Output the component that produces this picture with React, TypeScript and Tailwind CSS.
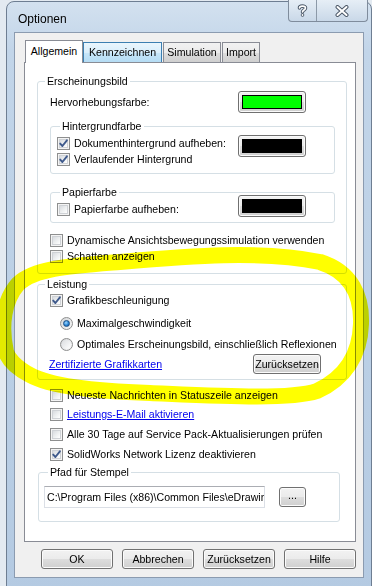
import type { ReactNode } from 'react';

function Check({ checked }: { checked?: boolean }) {
  return (
    <span className="relative flex size-[13px] shrink-0 items-center justify-center border border-[#8e8f8f] bg-[#f4f4f4]">
      <span className="size-[9px] border border-[#cfd2d6] bg-[linear-gradient(135deg,#d8dbdf_0%,#eef0f1_55%,#ffffff_100%)]" />
      {checked && (
        <svg className="absolute left-0 top-0" width="11" height="11" viewBox="0 0 11 11">
          <path d="M2.2 5.6 L4.4 8 L8.9 2.3" fill="none" stroke="#3f5a8c" strokeWidth="1.9" strokeLinecap="round" strokeLinejoin="round" />
        </svg>
      )}
    </span>
  );
}

function Radio({ checked }: { checked?: boolean }) {
  return (
    <span className="flex size-[13px] shrink-0 items-center justify-center rounded-full border border-[#8e8f8f] bg-[linear-gradient(135deg,#d4d6d9,#f7f7f7)]">
      {checked ? (
        <span className="size-[7px] rounded-full border border-[#1b4f86] bg-[radial-gradient(circle_at_40%_35%,#9fd8ff_0%,#2a86d6_55%,#0d4d92_100%)]" />
      ) : (
        <span className="size-[9px] rounded-full bg-[linear-gradient(135deg,#dcdee1,#ffffff)]" />
      )}
    </span>
  );
}

function CheckRow({ checked, children, className = '' }: { checked?: boolean; children: ReactNode; className?: string }) {
  return (
    <div className={`flex h-[16px] items-center ${className}`}>
      <Check checked={checked} />
      <span className="ml-[4px] whitespace-nowrap">{children}</span>
    </div>
  );
}

function WinButton({ children, className = '' }: { children: ReactNode; className?: string }) {
  return (
    <div
      className={`flex items-center justify-center rounded-[3px] border border-[#707070] bg-[linear-gradient(#f2f2f2_0%,#ebebeb_50%,#dddddd_51%,#cfcfcf_100%)] shadow-[inset_0_0_0_1px_#fbfbfb] ${className}`}
    >
      {children}
    </div>
  );
}

function ColorButton({ color, className = '' }: { color: string; className?: string }) {
  return (
    <WinButton className={`h-[22px] w-[68px] shrink-0 p-[3px] ${className}`}>
      <span className={`h-full w-full border border-black ${color}`} />
    </WinButton>
  );
}

function Group({ label, className = '', labelLeft, children }: { label: string; className?: string; labelLeft: string; children: ReactNode }) {
  return (
    <div className={`relative rounded-[3px] border border-[#d5dfe5] ${className}`}>
      <span className={`absolute -top-[7px] bg-white px-[2px] leading-[13px] ${labelLeft}`}>{label}</span>
      {children}
    </div>
  );
}

export default function App() {
  return (
    <div className="relative h-[586px] w-[372px] overflow-hidden bg-[#e3eaf1] font-['Liberation_Sans',Arial,sans-serif] text-[10.6px] leading-[13px] text-black">
      {/* dialog window */}
      <div className="ml-[6px] mt-[1px] flex h-[600px] w-[366px] flex-col rounded-t-[8px] border border-[#6e7e92] bg-[linear-gradient(180deg,#d3e1ef_0%,#c2d5e9_8%,#b4cae2_100%)]">
        {/* title bar */}
        <div className="flex h-[30px] items-start">
          <span className="ml-[11px] mt-[10px] text-[12px] leading-[14px]">Optionen</span>
          <div className="-mt-[2px] ml-auto mr-[3px] flex h-[22px] overflow-hidden rounded-b-[4px] border border-t-0 border-[#7f8c9c] bg-[linear-gradient(180deg,#e6eef6,#c9d8e8)]">
            <div className="flex w-[28px] items-center justify-center border-r border-[#8c99a8]">
              <svg width="11" height="13" viewBox="0 0 11 13">
                <path d="M2.5 4 C2.5 1.5 8.5 1.5 8.5 4 C8.5 6 5.5 6 5.5 8" fill="none" stroke="#4c5868" strokeWidth="3.6" strokeLinecap="round" />
                <path d="M2.5 4 C2.5 1.5 8.5 1.5 8.5 4 C8.5 6 5.5 6 5.5 8" fill="none" stroke="#ffffff" strokeWidth="1.6" strokeLinecap="round" />
                <circle cx="5.5" cy="11" r="1.8" fill="#4c5868" />
                <circle cx="5.5" cy="11" r="0.9" fill="#ffffff" />
              </svg>
            </div>
            <div className="flex w-[50px] items-center justify-center">
              <svg width="14" height="12" viewBox="0 0 14 12">
                <path d="M2.5 2 L11.5 10 M11.5 2 L2.5 10" fill="none" stroke="#4c5868" strokeWidth="4" strokeLinecap="round" />
                <path d="M2.5 2 L11.5 10 M11.5 2 L2.5 10" fill="none" stroke="#ffffff" strokeWidth="2" strokeLinecap="round" />
              </svg>
            </div>
          </div>
        </div>

        {/* client area */}
        <div className="mx-[7px] flex h-[546px] flex-col border border-[#8b9bb0] bg-[#f0f0f0] pt-[7px]">
          {/* tabs */}
          <div className="ml-[10px] flex h-[22px] items-end">
            <div className="relative z-10 -mb-px flex h-[23px] w-[58px] items-center justify-center border-x border-t border-[#898c95] bg-white pb-[2px]">
              Allgemein
            </div>
            <div className="flex h-[20px] w-[79px] items-center justify-center border-x border-t border-[#3c7fb1] bg-[linear-gradient(#eaf6fd,#d9eefb_50%,#c7e6f9_51%,#b5dcf4)]">
              Kennzeichnen
            </div>
            <div className="ml-px flex h-[20px] w-[58px] items-center justify-center border-x border-t border-[#898c95] bg-[linear-gradient(#f2f2f2,#ebebeb_50%,#dddddd_51%,#cfcfcf)]">
              Simulation
            </div>
            <div className="ml-px flex h-[20px] w-[38px] items-center justify-center border-x border-t border-[#898c95] bg-[linear-gradient(#f2f2f2,#ebebeb_50%,#dddddd_51%,#cfcfcf)]">
              Import
            </div>
          </div>

          {/* tab panel */}
          <div className="ml-[9px] w-[332px] border border-[#898c95] bg-white pb-[19px]">
            <Group label="Erscheinungsbild" labelLeft="left-[7px]" className="ml-[12px] mt-[18px] w-[310px] pb-[9px]">
              <div className="mt-[9px] flex h-[22px] items-center pl-[12px] pr-[40px]">
                <span>Hervorhebungsfarbe:</span>
                <ColorButton color="bg-[#00ff00]" className="ml-auto" />
              </div>

              <Group label="Hintergrundfarbe" labelLeft="left-[9px]" className="ml-[12px] mr-[11px] mt-[13px]">
                <div className="flex items-start pb-[6px] pl-[6px] pr-[28px] pt-[8px]">
                  <div className="flex flex-col">
                    <CheckRow checked>Dokumenthintergrund aufheben:</CheckRow>
                    <CheckRow checked>Verlaufender Hintergrund</CheckRow>
                  </div>
                  <ColorButton color="bg-black" className="ml-auto" />
                </div>
              </Group>

              <Group label="Papierfarbe" labelLeft="left-[9px]" className="ml-[12px] mr-[11px] mt-[18px]">
                <div className="flex items-start pb-[5px] pl-[6px] pr-[28px] pt-[2px]">
                  <CheckRow className="mt-[6px]">Papierfarbe aufheben:</CheckRow>
                  <ColorButton color="bg-black" className="ml-auto" />
                </div>
              </Group>

              <CheckRow className="ml-[12px] mt-[9px]">Dynamische Ansichtsbewegungssimulation verwenden</CheckRow>
              <CheckRow className="ml-[12px]">Schatten anzeigen</CheckRow>
            </Group>

            <Group label="Leistung" labelLeft="left-[7px]" className="ml-[12px] mt-[10px] w-[310px] pb-[5px] pt-[7px]">
              <CheckRow checked className="ml-[12px]">Grafikbeschleunigung</CheckRow>
              <div className="ml-[22px] mt-[7px] flex h-[16px] items-center">
                <Radio checked />
                <span className="ml-[4px]">Maximalgeschwindigkeit</span>
              </div>
              <div className="ml-[22px] mt-[5px] flex h-[16px] items-center">
                <Radio />
                <span className="ml-[4px] whitespace-nowrap">Optimales Erscheinungsbild, einschließlich Reflexionen</span>
              </div>
              <div className="mt-[2px] flex h-[20px] items-center pl-[11px] pr-[25px]">
                <span className="text-[#0000ee] underline">Zertifizierte Grafikkarten</span>
                <WinButton className="ml-auto h-[20px] w-[68px] border-[#3c7fb1]">Zurücksetzen</WinButton>
              </div>
            </Group>

            <CheckRow className="ml-[25px] mt-[7px]">Neueste Nachrichten in Statuszeile anzeigen</CheckRow>
            <CheckRow className="ml-[25px] mt-[3px]">
              <span className="text-[#0000ee] underline">Leistungs-E-Mail aktivieren</span>
            </CheckRow>
            <CheckRow className="ml-[25px] mt-[4px]">Alle 30 Tage auf Service Pack-Aktualisierungen prüfen</CheckRow>
            <CheckRow checked className="ml-[25px] mt-[4px]">SolidWorks Network Lizenz deaktivieren</CheckRow>

            <Group label="Pfad für Stempel" labelLeft="left-[9px]" className="ml-[13px] mt-[10px] w-[302px] pb-[13px] pt-[13px]">
              <div className="flex items-center">
                <div className="ml-[5px] flex h-[22px] w-[221px] items-center overflow-hidden whitespace-nowrap border border-[#dbdfe6] border-t-[#abadb3] bg-white pl-[2px]">
                  C:\Program Files (x86)\Common Files\eDrawin
                </div>
                <WinButton className="ml-[14px] h-[20px] w-[27px] pb-[4px]">...</WinButton>
              </div>
            </Group>
          </div>

          {/* dialog buttons */}
          <div className="mt-[7px] flex gap-[9px] pl-[26px]">
            <WinButton className="h-[20px] w-[72px]">OK</WinButton>
            <WinButton className="h-[20px] w-[72px]">Abbrechen</WinButton>
            <WinButton className="h-[20px] w-[72px]">Zurücksetzen</WinButton>
            <WinButton className="h-[20px] w-[72px]">Hilfe</WinButton>
          </div>
        </div>
      </div>

      {/* hand-drawn yellow highlight */}
      <svg className="pointer-events-none absolute left-0 top-0 mix-blend-multiply" width="372" height="586" viewBox="0 0 372 586">
        <path
          d="M6 352 C0 325 4 300 18 284 C35 268 70 266 120 262 C190 256 260 250 320 262 C352 272 362 297 361 324 C360 355 345 378 317 391 C290 400 220 396 150 393 C90 391 50 386 30 375 C15 367 8 358 6 352"
          fill="none"
          stroke="#ffff00"
          strokeWidth="16"
          strokeLinecap="round"
          strokeLinejoin="round"
        />
      </svg>
    </div>
  );
}
